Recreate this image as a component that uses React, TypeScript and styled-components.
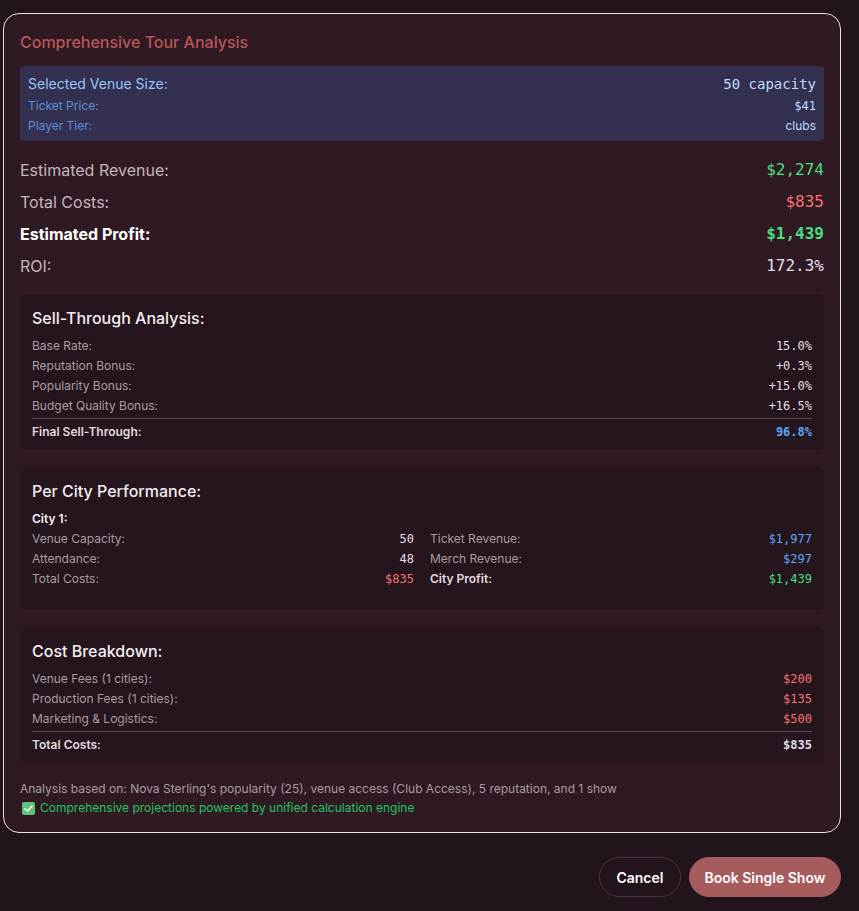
import React from "react";
import styled, { createGlobalStyle } from "styled-components";

const Global = createGlobalStyle`
  html, body { margin: 0; padding: 0; background: #22141c; }
  body { font-family: Inter, "Noto Sans", sans-serif; -webkit-font-smoothing: antialiased; }
  * { box-sizing: border-box; }
`;

const mono = `"DejaVu Sans Mono", "Liberation Mono", monospace`;

const Page = styled.div`
  padding: 13px 18px 14px 3px;
  display: flex;
  flex-direction: column;
`;

const Card = styled.div`
  background: #2f1a24;
  border: 1px solid #e8e0e4;
  border-radius: 16px;
  padding: 16px;
  display: flex;
  flex-direction: column;
`;

const Title = styled.h3`
  margin: 0 0 12px;
  font-size: 16px;
  line-height: 24px;
  font-weight: 500;
  color: #b85656;
`;

const VenueBox = styled.div`
  background: #34304f;
  border-radius: 4px;
  padding: 8px 8px 7px;
  display: flex;
  flex-direction: column;
  gap: 4px;
`;

const Row = styled.div`
  display: flex;
  justify-content: space-between;
  align-items: center;
`;

const VLabel = styled.span<{ $big?: boolean }>`
  font-size: ${(p) => (p.$big ? 14 : 12)}px;
  line-height: ${(p) => (p.$big ? 20 : 16)}px;
  color: ${(p) => (p.$big ? "#93c5fd" : "#5b8ede")};
`;

const VValue = styled.span<{ $big?: boolean; $mono?: boolean }>`
  font-family: ${(p) => (p.$mono ? mono : "inherit")};
  font-size: ${(p) => (p.$big ? 14 : 12)}px;
  line-height: ${(p) => (p.$big ? 20 : 16)}px;
  color: #bfdbfe;
`;

const Summary = styled.div`
  margin: 17px 0 16px;
  display: flex;
  flex-direction: column;
  gap: 8px;
`;

const SLabel = styled.span<{ $strong?: boolean }>`
  font-size: 16px;
  line-height: 24px;
  color: ${(p) => (p.$strong ? "#ffffff" : "#c2b6bc")};
  font-weight: ${(p) => (p.$strong ? 700 : 400)};
`;

const SValue = styled.span<{ $color: string; $strong?: boolean }>`
  font-family: ${mono};
  font-size: 16px;
  line-height: 24px;
  color: ${(p) => p.$color};
  font-weight: ${(p) => (p.$strong ? 700 : 400)};
`;

const Panel = styled.div<{ $bottom?: number }>`
  background: #24161c;
  border-radius: 6px;
  padding: 12px 12px ${(p) => p.$bottom ?? 10}px;
  margin-bottom: 17px;
  display: flex;
  flex-direction: column;
`;

const PanelTitle = styled.h4`
  margin: 0 0 8px;
  font-size: 16px;
  line-height: 24px;
  font-weight: 500;
  color: #f4eef1;
`;

const Lines = styled.div`
  display: flex;
  flex-direction: column;
  gap: 4px;
`;

const Label = styled.span<{ $strong?: boolean }>`
  font-size: 12px;
  line-height: 16px;
  color: ${(p) => (p.$strong ? "#e2d9de" : "#a99ca3")};
  font-weight: ${(p) => (p.$strong ? 600 : 400)};
`;

const Value = styled.span<{ $color?: string; $strong?: boolean }>`
  font-family: ${mono};
  font-size: 12px;
  line-height: 16px;
  color: ${(p) => p.$color || "#e2dde6"};
  font-weight: ${(p) => (p.$strong ? 700 : 400)};
`;

const TotalRow = styled(Row)`
  border-top: 1px solid #5a4a52;
  margin-top: 4px;
  padding-top: 5px;
`;

const CityName = styled.div`
  font-size: 12px;
  line-height: 16px;
  font-weight: 600;
  color: #f4eef1;
  margin: 0 0 4px;
`;

const CityGrid = styled.div`
  display: grid;
  grid-template-columns: 1fr 1fr;
  column-gap: 16px;
`;

const Footnote = styled.p`
  margin: 0 0 3px;
  font-size: 12px;
  line-height: 16px;
  color: #a69aa1;
`;

const Powered = styled.div`
  display: flex;
  align-items: center;
  gap: 5px;
  padding-left: 2px;
  font-size: 12px;
  line-height: 16px;
  color: #22c55e;
`;

const Actions = styled.div`
  display: flex;
  justify-content: flex-end;
  gap: 8px;
  margin-top: 24px;
`;

const Button = styled.button<{ $primary?: boolean }>`
  height: 40px;
  padding: 0 ${(p) => (p.$primary ? 14.5 : 16.5)}px;
  border-radius: 999px;
  font-family: Inter, sans-serif;
  font-size: 14px;
  font-weight: 600;
  color: #ffffff;
  border: 1px solid ${(p) => (p.$primary ? "#a65b5c" : "#4b3441")};
  background: ${(p) => (p.$primary ? "#a65b5c" : "transparent")};
  cursor: pointer;
`;

const CheckIcon = () => (
  <svg width="13" height="13" viewBox="0 0 13 13">
    <rect x="0" y="0" width="13" height="13" rx="2" fill="#5fc17a" />
    <path d="M3 6.8 L5.4 9 L10 4.2" stroke="#fff" strokeWidth="1.6" fill="none" strokeLinecap="round" strokeLinejoin="round" />
  </svg>
);

export default function App() {
  return (
    <>
      <Global />
      <Page>
        <Card>
          <Title>Comprehensive Tour Analysis</Title>
          <VenueBox>
            <Row>
              <VLabel $big>Selected Venue Size:</VLabel>
              <VValue $big $mono>50 capacity</VValue>
            </Row>
            <Row>
              <VLabel>Ticket Price:</VLabel>
              <VValue $mono>$41</VValue>
            </Row>
            <Row>
              <VLabel>Player Tier:</VLabel>
              <VValue>clubs</VValue>
            </Row>
          </VenueBox>

          <Summary>
            <Row>
              <SLabel>Estimated Revenue:</SLabel>
              <SValue $color="#4ade80">$2,274</SValue>
            </Row>
            <Row>
              <SLabel>Total Costs:</SLabel>
              <SValue $color="#f87171">$835</SValue>
            </Row>
            <Row>
              <SLabel $strong>Estimated Profit:</SLabel>
              <SValue $color="#4ade80" $strong>$1,439</SValue>
            </Row>
            <Row>
              <SLabel>ROI:</SLabel>
              <SValue $color="#e2dde8">172.3%</SValue>
            </Row>
          </Summary>

          <Panel>
            <PanelTitle>Sell-Through Analysis:</PanelTitle>
            <Lines>
              <Row><Label>Base Rate:</Label><Value>15.0%</Value></Row>
              <Row><Label>Reputation Bonus:</Label><Value>+0.3%</Value></Row>
              <Row><Label>Popularity Bonus:</Label><Value>+15.0%</Value></Row>
              <Row><Label>Budget Quality Bonus:</Label><Value>+16.5%</Value></Row>
            </Lines>
            <TotalRow>
              <Label $strong>Final Sell-Through:</Label>
              <Value $color="#60a5fa" $strong>96.8%</Value>
            </TotalRow>
          </Panel>

          <Panel $bottom={23}>
            <PanelTitle>Per City Performance:</PanelTitle>
            <CityName>City 1:</CityName>
            <CityGrid>
              <Lines>
                <Row><Label>Venue Capacity:</Label><Value>50</Value></Row>
                <Row><Label>Attendance:</Label><Value>48</Value></Row>
                <Row><Label>Total Costs:</Label><Value $color="#f87171">$835</Value></Row>
              </Lines>
              <Lines>
                <Row><Label>Ticket Revenue:</Label><Value $color="#60a5fa">$1,977</Value></Row>
                <Row><Label>Merch Revenue:</Label><Value $color="#60a5fa">$297</Value></Row>
                <Row><Label $strong>City Profit:</Label><Value $color="#4ade80">$1,439</Value></Row>
              </Lines>
            </CityGrid>
          </Panel>

          <Panel $bottom={11}>
            <PanelTitle>Cost Breakdown:</PanelTitle>
            <Lines>
              <Row><Label>Venue Fees (1 cities):</Label><Value $color="#f87171">$200</Value></Row>
              <Row><Label>Production Fees (1 cities):</Label><Value $color="#f87171">$135</Value></Row>
              <Row><Label>Marketing &amp; Logistics:</Label><Value $color="#f87171">$500</Value></Row>
            </Lines>
            <TotalRow>
              <Label $strong>Total Costs:</Label>
              <Value $strong>$835</Value>
            </TotalRow>
          </Panel>

          <Footnote>
            Analysis based on: Nova Sterling's popularity (25), venue access (Club Access), 5 reputation, and 1 show
          </Footnote>
          <Powered>
            <CheckIcon />
            Comprehensive projections powered by unified calculation engine
          </Powered>
        </Card>
        <Actions>
          <Button>Cancel</Button>
          <Button $primary>Book Single Show</Button>
        </Actions>
      </Page>
    </>
  );
}
